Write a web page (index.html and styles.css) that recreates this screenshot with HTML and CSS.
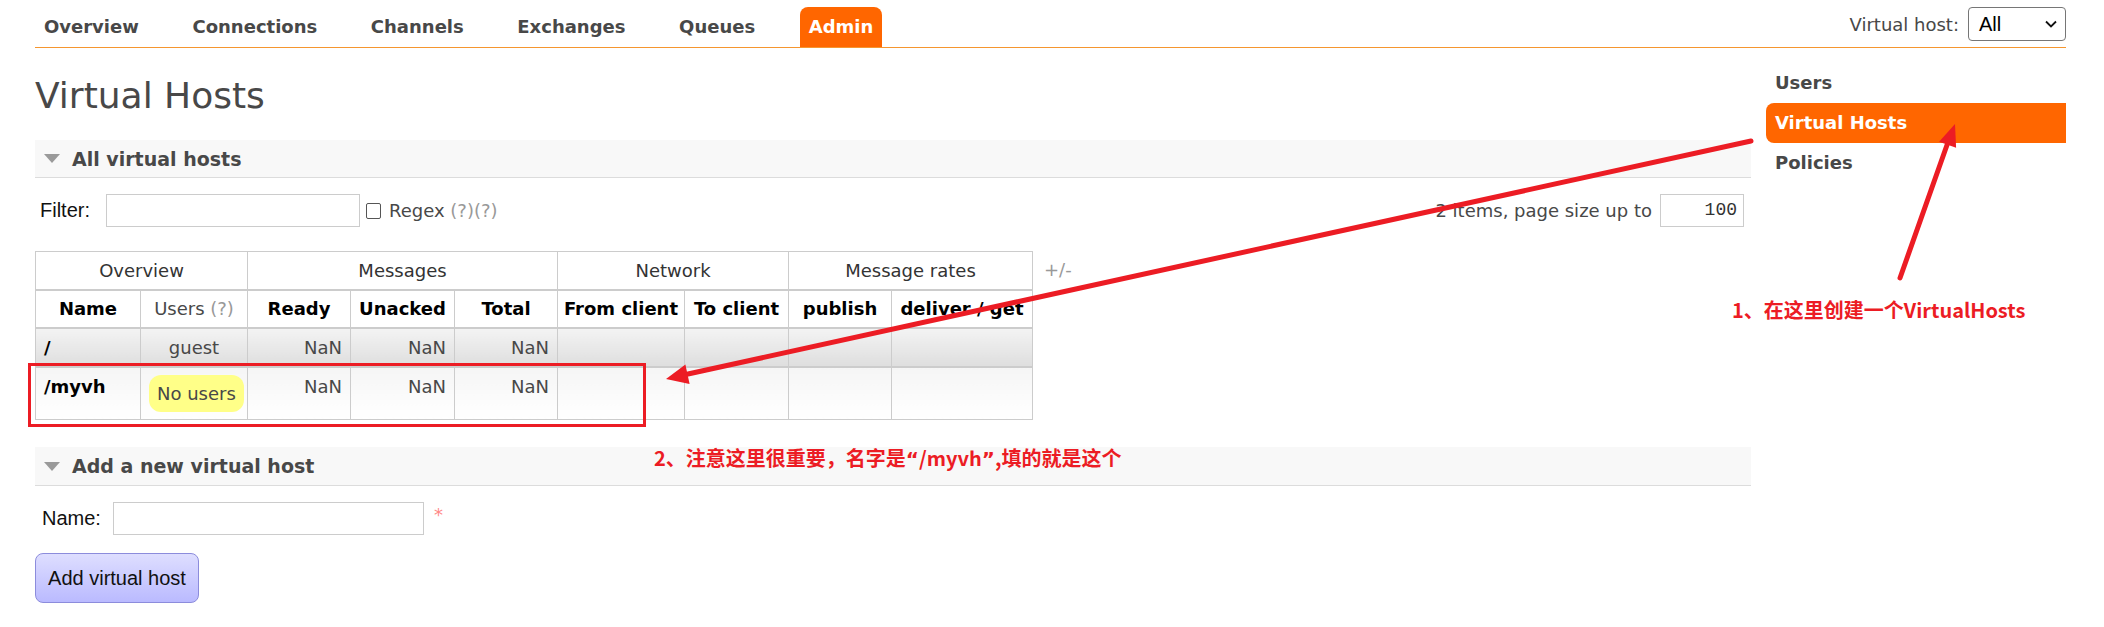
FILE: index.html
```html
<!DOCTYPE html>
<html lang="zh-CN">
<head>
<meta charset="utf-8">
<title>Virtual Hosts</title>
<link rel="stylesheet" href="styles.css">
</head>
<body>
<div class="page">
  <header class="topbar">
    <ul class="nav">
      <li><a href="#">Overview</a></li>
      <li><a href="#">Connections</a></li>
      <li><a href="#">Channels</a></li>
      <li><a href="#">Exchanges</a></li>
      <li><a href="#">Queues</a></li>
      <li><a href="#" class="active">Admin</a></li>
    </ul>
    <div class="vhost">
      <span>Virtual host:</span>
      <div class="select"><span>All</span>
        <svg class="chev" width="12" height="8" viewBox="0 0 12 8"><path d="M1 1.5 L6 6.5 L11 1.5" fill="none" stroke="#111" stroke-width="1.8"/></svg>
      </div>
    </div>
  </header>

  <div class="layout">
    <main class="content">
      <h1>Virtual Hosts</h1>

      <section>
        <h2 class="section-head"><span class="tri"></span>All virtual hosts</h2>
        <div class="filter-row">
          <div class="filter-left">
            <label class="form-label">Filter:</label>
            <span class="input filter-input"></span>
            <span class="checkbox"></span>
            <span>Regex <span class="help">(?)(?)</span></span>
          </div>
          <div class="filter-right">
            <span>2 items, page size up to</span>
            <span class="input page-input">100</span>
          </div>
        </div>

        <div class="table-wrap">
          <table class="list">
            <colgroup>
              <col style="width:105px"><col style="width:107px"><col style="width:103px"><col style="width:104px"><col style="width:103px"><col style="width:127px"><col style="width:104px"><col style="width:103px"><col style="width:141px">
            </colgroup>
            <thead>
              <tr class="group">
                <th colspan="2">Overview</th>
                <th colspan="3">Messages</th>
                <th colspan="2">Network</th>
                <th colspan="2">Message rates</th>
              </tr>
              <tr class="cols">
                <th>Name</th>
                <th class="plain">Users <span class="help">(?)</span></th>
                <th>Ready</th>
                <th>Unacked</th>
                <th>Total</th>
                <th>From client</th>
                <th>To client</th>
                <th>publish</th>
                <th>deliver / get</th>
              </tr>
            </thead>
            <tbody>
              <tr class="alt1">
                <td class="name">/</td>
                <td class="center">guest</td>
                <td class="num">NaN</td>
                <td class="num">NaN</td>
                <td class="num">NaN</td>
                <td></td><td></td><td></td><td></td>
              </tr>
              <tr class="alt2">
                <td class="name">/myvh</td>
                <td class="center mid"><span class="pill">No users</span></td>
                <td class="num">NaN</td>
                <td class="num">NaN</td>
                <td class="num">NaN</td>
                <td></td><td></td><td></td><td></td>
              </tr>
            </tbody>
          </table>
          <span class="toggle">+/-</span>
        </div>
      </section>

      <section class="add-section">
        <h2 class="section-head"><span class="tri"></span>Add a new virtual host</h2>
        <div class="name-row">
          <label class="form-label">Name:</label>
          <span class="input name-input"></span>
          <span class="req">*</span>
        </div>
        <button class="btn" type="button">Add virtual host</button>
      </section>
    </main>

    <aside class="sidebar">
      <ul class="side-nav">
        <li><a href="#">Users</a></li>
        <li><a href="#" class="active">Virtual Hosts</a></li>
        <li><a href="#">Policies</a></li>
      </ul>
    </aside>
  </div>

  <svg class="overlay" width="2104" height="627" viewBox="0 0 2104 627">
    <rect x="29.5" y="364.5" width="615" height="61" fill="none" stroke="#ec1c24" stroke-width="3"/>
    <line x1="1751" y1="141" x2="688" y2="374" stroke="#ec1c24" stroke-width="5" stroke-linecap="round"/>
    <polygon points="666,379 689.6,384.1 685.4,364.5" fill="#ec1c24"/>
    <line x1="1900" y1="278" x2="1947" y2="145" stroke="#ec1c24" stroke-width="5" stroke-linecap="round"/>
    <polygon points="1955,124 1956.1,147.7 1939.1,141.7" fill="#ec1c24"/>
  </svg>
  <div class="note note1">1、在这里创建一个VirtualHosts</div>
  <div class="note note2">2、注意这里很重要，名字是<span class="q">“</span>/myvh<span class="q">”</span>,填的就是这个</div>
</div>
</body>
</html>
```

FILE: styles.css
```css
* { box-sizing: border-box; }

body {
  margin: 0;
  background: #fff;
  font-family: "DejaVu Sans", Verdana, sans-serif;
  font-size: 18px;
  color: #484848;
}

.page {
  position: relative;
  width: 2104px;
  height: 627px;
  padding: 0 38px 0 35px;
  overflow: hidden;
}

/* top bar */
.topbar {
  display: flex;
  justify-content: space-between;
  align-items: flex-end;
  height: 48px;
  border-bottom: 1px solid #f5962f;
}

.nav {
  display: flex;
  gap: 35.6px;
  list-style: none;
  margin: 0;
  padding: 0;
}

.nav a {
  display: block;
  height: 40px;
  line-height: 40px;
  padding: 0 9px;
  font-weight: bold;
  color: #484848;
  text-decoration: none;
}

.nav a.active {
  background: #ff6600;
  color: #fff;
  border-radius: 8px 8px 0 0;
}

.vhost {
  align-self: flex-start;
  margin-top: 7px;
  display: flex;
  align-items: center;
  gap: 9px;
}

.select {
  width: 98px;
  height: 34px;
  border: 1px solid #767676;
  border-radius: 4px;
  display: flex;
  align-items: center;
  justify-content: space-between;
  padding: 0 8px 0 10px;
  font-family: "Liberation Sans", Arial, sans-serif;
  font-size: 20px;
  color: #000;
}

/* layout */
.layout {
  display: flex;
  gap: 15px;
}

.content {
  width: 1716px;
  flex: none;
}

.sidebar {
  flex: 1;
  padding-top: 15px;
}

h1 {
  margin: 26px 0 22px;
  font-size: 36px;
  line-height: 44px;
  font-weight: normal;
  color: #484848;
}

.section-head {
  margin: 0;
  height: 38px;
  display: flex;
  align-items: center;
  gap: 12px;
  padding-left: 9px;
  background: #f8f8f8;
  border-bottom: 1px solid #dcdcdc;
  font-size: 19px;
  font-weight: bold;
  color: #484848;
}

.tri {
  width: 0;
  height: 0;
  border-left: 8px solid transparent;
  border-right: 8px solid transparent;
  border-top: 9px solid #9a9a9a;
}

.form-label {
  font-family: "Liberation Sans", Arial, sans-serif;
  font-size: 20px;
  color: #111;
}

.input {
  display: inline-block;
  height: 33px;
  border: 1px solid #cccccc;
  background: #fff;
}

.filter-row {
  display: flex;
  justify-content: space-between;
  align-items: center;
  margin-top: 16px;
  height: 33px;
  padding: 0 7px 0 5px;
}

.filter-left {
  display: flex;
  align-items: center;
}

.filter-left .form-label { margin-right: 16px; }

.filter-input { width: 254px; }

.checkbox {
  width: 15px;
  height: 16px;
  border: 1px solid #555;
  border-radius: 2px;
  margin: 0 8px 0 6px;
}

.help { color: #999; }

.filter-right {
  display: flex;
  align-items: center;
  gap: 8px;
}

.page-input {
  width: 84px;
  text-align: right;
  padding-right: 6px;
  font-family: "Liberation Mono", monospace;
  font-size: 18px;
  line-height: 31px;
  color: #333;
}

/* table */
.table-wrap {
  display: flex;
  align-items: flex-start;
  gap: 11px;
  margin-top: 24px;
}

table.list {
  border-collapse: collapse;
  table-layout: fixed;
  width: 997px;
}

table.list th,
table.list td {
  border: 1px solid #cccccc;
  padding: 0 8px;
  white-space: nowrap;
  overflow: hidden;
}

table.list tr.group th {
  height: 38px;
  font-weight: normal;
  color: #333;
  border-bottom-width: 2px;
}

table.list tr.cols th {
  height: 38px;
  font-weight: bold;
  color: #000;
  padding: 0 4px;
  border-bottom-width: 2px;
}

table.list tr.cols th.plain {
  font-weight: normal;
  color: #484848;
}

table.list tr.alt1 td {
  height: 39px;
  background: linear-gradient(#f3f3f3, #dedede);
  border-bottom-width: 2px;
}

table.list tr.alt2 td {
  height: 53px;
  background: linear-gradient(#f5f5f5, #ffffff);
  vertical-align: top;
  padding-top: 8px;
}

table.list tr.alt2 td.mid {
  vertical-align: middle;
  padding-top: 0;
}

td.name {
  font-weight: bold;
  color: #000;
}

td.center { text-align: center; }

td.num { text-align: right; }

.pill {
  display: inline-block;
  height: 37px;
  line-height: 37px;
  padding: 0 8px;
  border-radius: 12px;
  background: #ffff88;
  color: #484848;
}

.toggle {
  color: #999;
  line-height: 38px;
}

/* add section */
.add-section { margin-top: 27px; }

.add-section .section-head { height: 39px; }

.name-row {
  display: flex;
  align-items: flex-start;
  margin-top: 16px;
  padding-left: 7px;
  height: 33px;
}

.name-row .form-label {
  margin-right: 12px;
  line-height: 33px;
}

.name-input { width: 311px; }

.req {
  margin-left: 10px;
  color: #f88;
  font-size: 18px;
  line-height: 22px;
  margin-top: 2px;
}

.btn {
  display: block;
  margin-top: 18px;
  width: 164px;
  height: 50px;
  border: 1px solid #8c8cdc;
  border-radius: 8px;
  background: linear-gradient(#dedeff, #babaff);
  font-family: "Liberation Sans", Arial, sans-serif;
  font-size: 20px;
  color: #111;
  padding: 0;
}

/* sidebar */
.side-nav {
  list-style: none;
  margin: 0;
  padding: 0;
}

.side-nav a {
  display: block;
  height: 40px;
  line-height: 40px;
  padding-left: 9px;
  font-weight: bold;
  color: #484848;
  text-decoration: none;
}

.side-nav a.active {
  background: #ff6600;
  color: #fff;
  border-radius: 8px 0 0 8px;
}

/* annotations */
.overlay {
  position: absolute;
  left: 0;
  top: 0;
  pointer-events: none;
}

.note {
  position: absolute;
  font-family: "Noto Sans CJK SC", "Microsoft YaHei", sans-serif;
  font-weight: bold;
  font-size: 20px;
  line-height: 24px;
  color: #ec1c24;
  white-space: nowrap;
}

.note .q {
  font-family: "DejaVu Sans", sans-serif;
}

.note1 { left: 1732px; top: 298px; }

.note2 { left: 654px; top: 446px; }
```
